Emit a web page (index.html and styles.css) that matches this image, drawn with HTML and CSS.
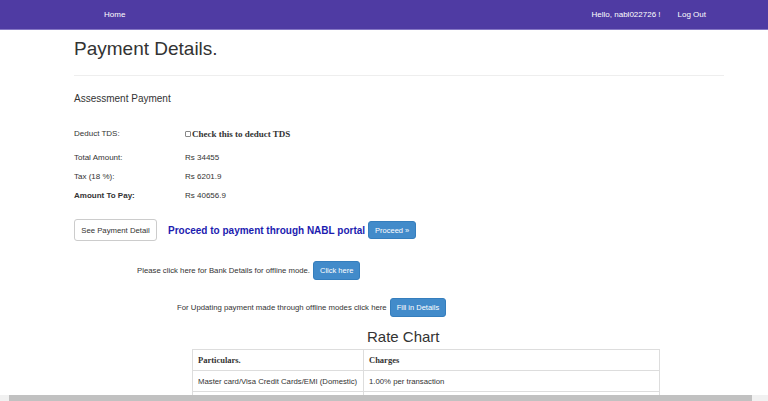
FILE: index.html
```html
<!DOCTYPE html>
<html lang="en">
<head>
    <meta charset="UTF-8">
    <title>Payment Details</title>
    <link rel="stylesheet" href="styles.css">
</head>
<body>
    <nav class="topbar">
        <div class="topbar-inner">
            <a href="#" class="nav-link">Home</a>
            <div class="user-links">
                <span class="nav-link">Hello, nabl022726 !</span>
                <a href="#" class="nav-link">Log Out</a>
            </div>
        </div>
    </nav>

    <div class="container">
        <h1>Payment Details.</h1>
        <hr>
        <h4>Assessment Payment</h4>

        <div class="detail-row first">
            <span class="label">Deduct TDS:</span>
            <label class="tds"><input type="checkbox">Check this to deduct TDS</label>
        </div>
        <div class="detail-row">
            <span class="label">Total Amount:</span>
            <span>Rs 34455</span>
        </div>
        <div class="detail-row">
            <span class="label">Tax (18 %):</span>
            <span>Rs 6201.9</span>
        </div>
        <div class="detail-row">
            <span class="label strong">Amount To Pay:</span>
            <span>Rs 40656.9</span>
        </div>

        <div class="action-row">
            <button class="btn btn-default">See Payment Detail</button>
            <span class="portal-text">Proceed to payment through NABL portal</span>
            <button class="btn btn-primary">Proceed &raquo;</button>
        </div>

        <div class="offline-row bank">
            <span>Please click here for Bank Details for offline mode.</span>
            <button class="btn btn-primary btn-tall">Click here</button>
        </div>

        <div class="offline-row update">
            <span>For Updating payment made through offline modes click here</span>
            <button class="btn btn-primary btn-tall">Fill in Details</button>
        </div>

        <h3>Rate Chart</h3>
        <table class="rate-table">
            <colgroup>
                <col class="col-particulars">
                <col>
            </colgroup>
            <tr>
                <th>Particulars.</th>
                <th>Charges</th>
            </tr>
            <tr>
                <td>Master card/Visa Credit Cards/EMI (Domestic)</td>
                <td>1.00% per transaction</td>
            </tr>
            <tr>
                <td>&nbsp;</td>
                <td>&nbsp;</td>
            </tr>
        </table>
    </div>

    <div class="hscroll"><div class="hscroll-thumb"></div></div>
</body>
</html>
```

FILE: styles.css
```css
body {
    margin: 0;
    font-family: "Liberation Sans", Arial, sans-serif;
    font-size: 8px;
    color: #333;
    background-color: #fff;
    overflow: hidden;
}
.topbar {
    background-color: #4f3ba3;
    border-bottom: 1px solid #8677c4;
}
.topbar-inner {
    height: 29px;
    display: flex;
    align-items: center;
    justify-content: space-between;
    padding: 0 62px 0 104px;
}
.nav-link {
    color: #fff;
    text-decoration: none;
    font-size: 8px;
}
.user-links {
    display: flex;
    gap: 17px;
}
.container {
    margin-left: 74px;
    width: 650px;
}
h1 {
    margin: 0;
    padding-top: 8px;
    font-size: 19px;
    line-height: 22px;
    font-weight: normal;
    color: #333;
}
hr {
    margin: 15px 0 0 0;
    border: 0;
    border-top: 1px solid #eee;
}
h4 {
    margin: 16px 0 0 0;
    font-size: 10px;
    line-height: 14px;
    font-weight: normal;
}
.detail-row {
    display: flex;
    height: 19px;
    align-items: center;
}
.detail-row.first {
    margin-top: 18px;
    margin-bottom: 5px;
}
.strong {
    font-weight: bold;
}
.label {
    width: 111px;
}
.tds {
    display: flex;
    align-items: center;
    font-family: "Liberation Serif", "Times New Roman", serif;
    font-weight: bold;
    font-size: 9px;
}
.tds input {
    appearance: none;
    -webkit-appearance: none;
    margin: 0 1px 0 0;
    width: 6px;
    height: 6px;
    border: 1px solid #888;
    border-radius: 1px;
    background-color: #fff;
}
.action-row {
    display: flex;
    align-items: center;
    margin-top: 14px;
}
.btn {
    font-family: "Liberation Sans", Arial, sans-serif;
    font-size: 7.5px;
    border-radius: 3px;
    border: 1px solid transparent;
    padding: 0 6px;
    height: 18px;
    white-space: nowrap;
    cursor: pointer;
}
.btn-default {
    background-color: #fff;
    border-color: #ccc;
    color: #333;
    height: 22px;
    width: 83px;
    padding: 0;
    font-size: 7.75px;
}
.btn-primary {
    background-color: #428bca;
    border-color: #357ebd;
    color: #fff;
}
.btn-tall {
    height: 19px;
}
.portal-text {
    margin: 0 3px 0 11px;
    color: #1c1cb0;
    font-weight: bold;
    font-size: 10px;
}
.offline-row {
    display: flex;
    align-items: center;
    gap: 3px;
    font-size: 7.75px;
}
.offline-row.bank {
    margin-top: 20px;
    padding-left: 63px;
}
.offline-row.update {
    margin-top: 18px;
    padding-left: 103px;
}
h3 {
    margin: 10px 0 0 0;
    padding-left: 293px;
    font-size: 15px;
    line-height: 20px;
    font-weight: normal;
}
.rate-table {
    margin: 2px 0 0 118px;
    width: 468px;
    border-collapse: collapse;
    table-layout: fixed;
}
.col-particulars {
    width: 171px;
}
.rate-table th,
.rate-table td {
    border: 1px solid #ddd;
    height: 20px;
    padding: 0 5px;
    text-align: left;
    font-size: 7.75px;
    white-space: nowrap;
}
.rate-table th {
    font-family: "Liberation Serif", "Times New Roman", serif;
    font-size: 8.5px;
    font-weight: bold;
}
.hscroll {
    position: fixed;
    left: 0;
    right: 0;
    bottom: 0;
    height: 6px;
    background-color: #f1f1f1;
}
.hscroll-thumb {
    margin-left: 9px;
    width: 743px;
    height: 6px;
    background-color: #c1c1c1;
}
```
